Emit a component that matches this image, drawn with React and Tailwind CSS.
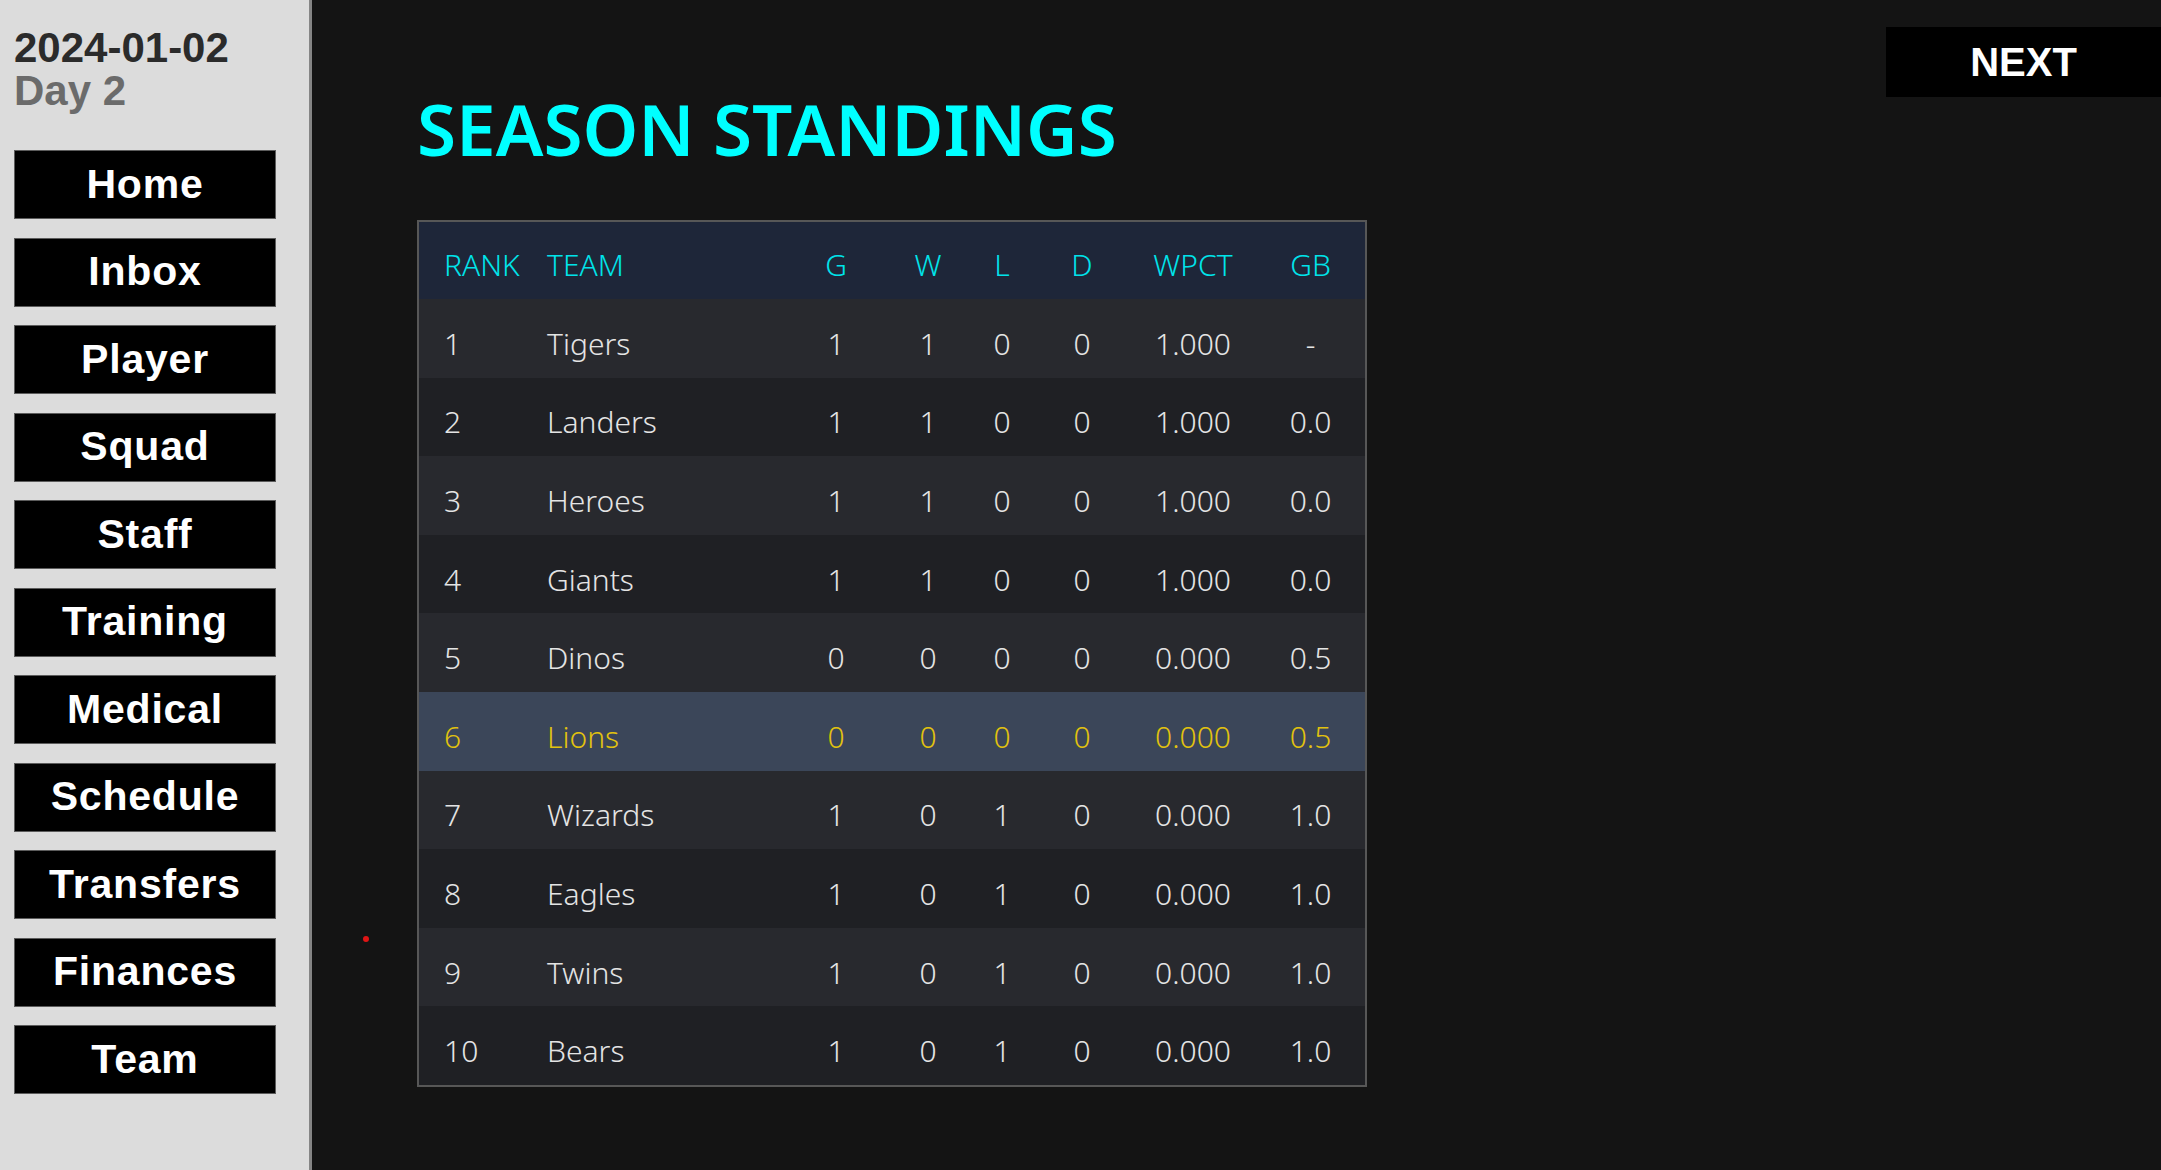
import React from 'react'

const navItems = ['Home', 'Inbox', 'Player', 'Squad', 'Staff', 'Training', 'Medical', 'Schedule', 'Transfers', 'Finances', 'Team']

const standings = [
  { rank: 1, team: 'Tigers', g: 1, w: 1, l: 0, d: 0, pct: '1.000', gb: '-' },
  { rank: 2, team: 'Landers', g: 1, w: 1, l: 0, d: 0, pct: '1.000', gb: '0.0' },
  { rank: 3, team: 'Heroes', g: 1, w: 1, l: 0, d: 0, pct: '1.000', gb: '0.0' },
  { rank: 4, team: 'Giants', g: 1, w: 1, l: 0, d: 0, pct: '1.000', gb: '0.0' },
  { rank: 5, team: 'Dinos', g: 0, w: 0, l: 0, d: 0, pct: '0.000', gb: '0.5' },
  { rank: 6, team: 'Lions', g: 0, w: 0, l: 0, d: 0, pct: '0.000', gb: '0.5', mine: true },
  { rank: 7, team: 'Wizards', g: 1, w: 0, l: 1, d: 0, pct: '0.000', gb: '1.0' },
  { rank: 8, team: 'Eagles', g: 1, w: 0, l: 1, d: 0, pct: '0.000', gb: '1.0' },
  { rank: 9, team: 'Twins', g: 1, w: 0, l: 1, d: 0, pct: '0.000', gb: '1.0' },
  { rank: 10, team: 'Bears', g: 1, w: 0, l: 1, d: 0, pct: '0.000', gb: '1.0' },
]

const cols = 'grid grid-cols-[128px_239px_100px_84px_64px_96px_126px_109px] items-center'

function Sidebar() {
  return (
    <div className="w-[312px] shrink-0 h-full bg-[#dcdcdc] border-r-[3px] border-[#858585] flex flex-col pl-[14px] pt-[26px] font-['Liberation_Sans',Arial,sans-serif]">
      <div className="text-[42px] leading-[43px] font-bold text-[#2b2b2b]">2024-01-02</div>
      <div className="text-[42px] leading-[43px] font-bold text-[#6b6b6b]">Day 2</div>

      <div className="mt-[38px] flex flex-col gap-[18.5px]">
        {navItems.map(item => (
          <button
            key={item}
            className="w-[262px] h-[69px] bg-black border border-[#5c5c5c] text-white text-[41px] font-bold tracking-[0.8px] flex items-center justify-center"
          >
            {item}
          </button>
        ))}
      </div>
    </div>
  )
}

function StandingsTable() {
  return (
    <div className="w-[950px] border-2 border-[#575757] font-['Noto_Sans',sans-serif] text-[30px] font-light">
      {/* header */}
      <div className={`${cols} h-[77px] pt-[8px] bg-[#1e2639] text-[#00e3ea]`}>
        <div className="pl-[25px]">RANK</div>
        <div>TEAM</div>
        <div className="text-center">G</div>
        <div className="text-center">W</div>
        <div className="text-center">L</div>
        <div className="text-center">D</div>
        <div className="text-center">WPCT</div>
        <div className="text-center">GB</div>
      </div>

      {standings.map((row, i) => (
        <div
          key={row.rank}
          className={`${cols} h-[78.6px] pt-[10px] ${
            row.mine
              ? 'bg-[#3b4659] text-[#e2c20e]'
              : i % 2 === 0
              ? 'bg-[#28292e] text-[#e4e4e4]'
              : 'bg-[#1f2024] text-[#e4e4e4]'
          }`}
        >
          <div className="pl-[25px]">{row.rank}</div>
          <div>{row.team}</div>
          <div className="text-center">{row.g}</div>
          <div className="text-center">{row.w}</div>
          <div className="text-center">{row.l}</div>
          <div className="text-center">{row.d}</div>
          <div className="text-center">{row.pct}</div>
          <div className="text-center">{row.gb}</div>
        </div>
      ))}
    </div>
  )
}

export default function App() {
  return (
    <div className="flex w-full h-screen bg-[#141414] overflow-hidden">
      <Sidebar />

      {/* Main */}
      <div className="relative flex-1 flex flex-col">
        <div className="flex justify-between items-start">
          <h1 className="pl-[105px] pt-[93px] text-[71px] leading-none font-semibold text-[#00ffff] font-['Noto_Sans',sans-serif]">
            SEASON STANDINGS
          </h1>
          <button className="mt-[27px] w-[275px] h-[70px] bg-black text-white text-[40px] font-bold font-['Liberation_Sans',Arial,sans-serif] flex items-center justify-center">
            NEXT
          </button>
        </div>

        <div className="pl-[105px] mt-[56px]">
          <StandingsTable />
        </div>

        {/* stray cursor marker */}
        <span className="absolute left-[51px] top-[936px] w-[6px] h-[6px] rounded-full bg-[#e01515]" />
      </div>
    </div>
  )
}
